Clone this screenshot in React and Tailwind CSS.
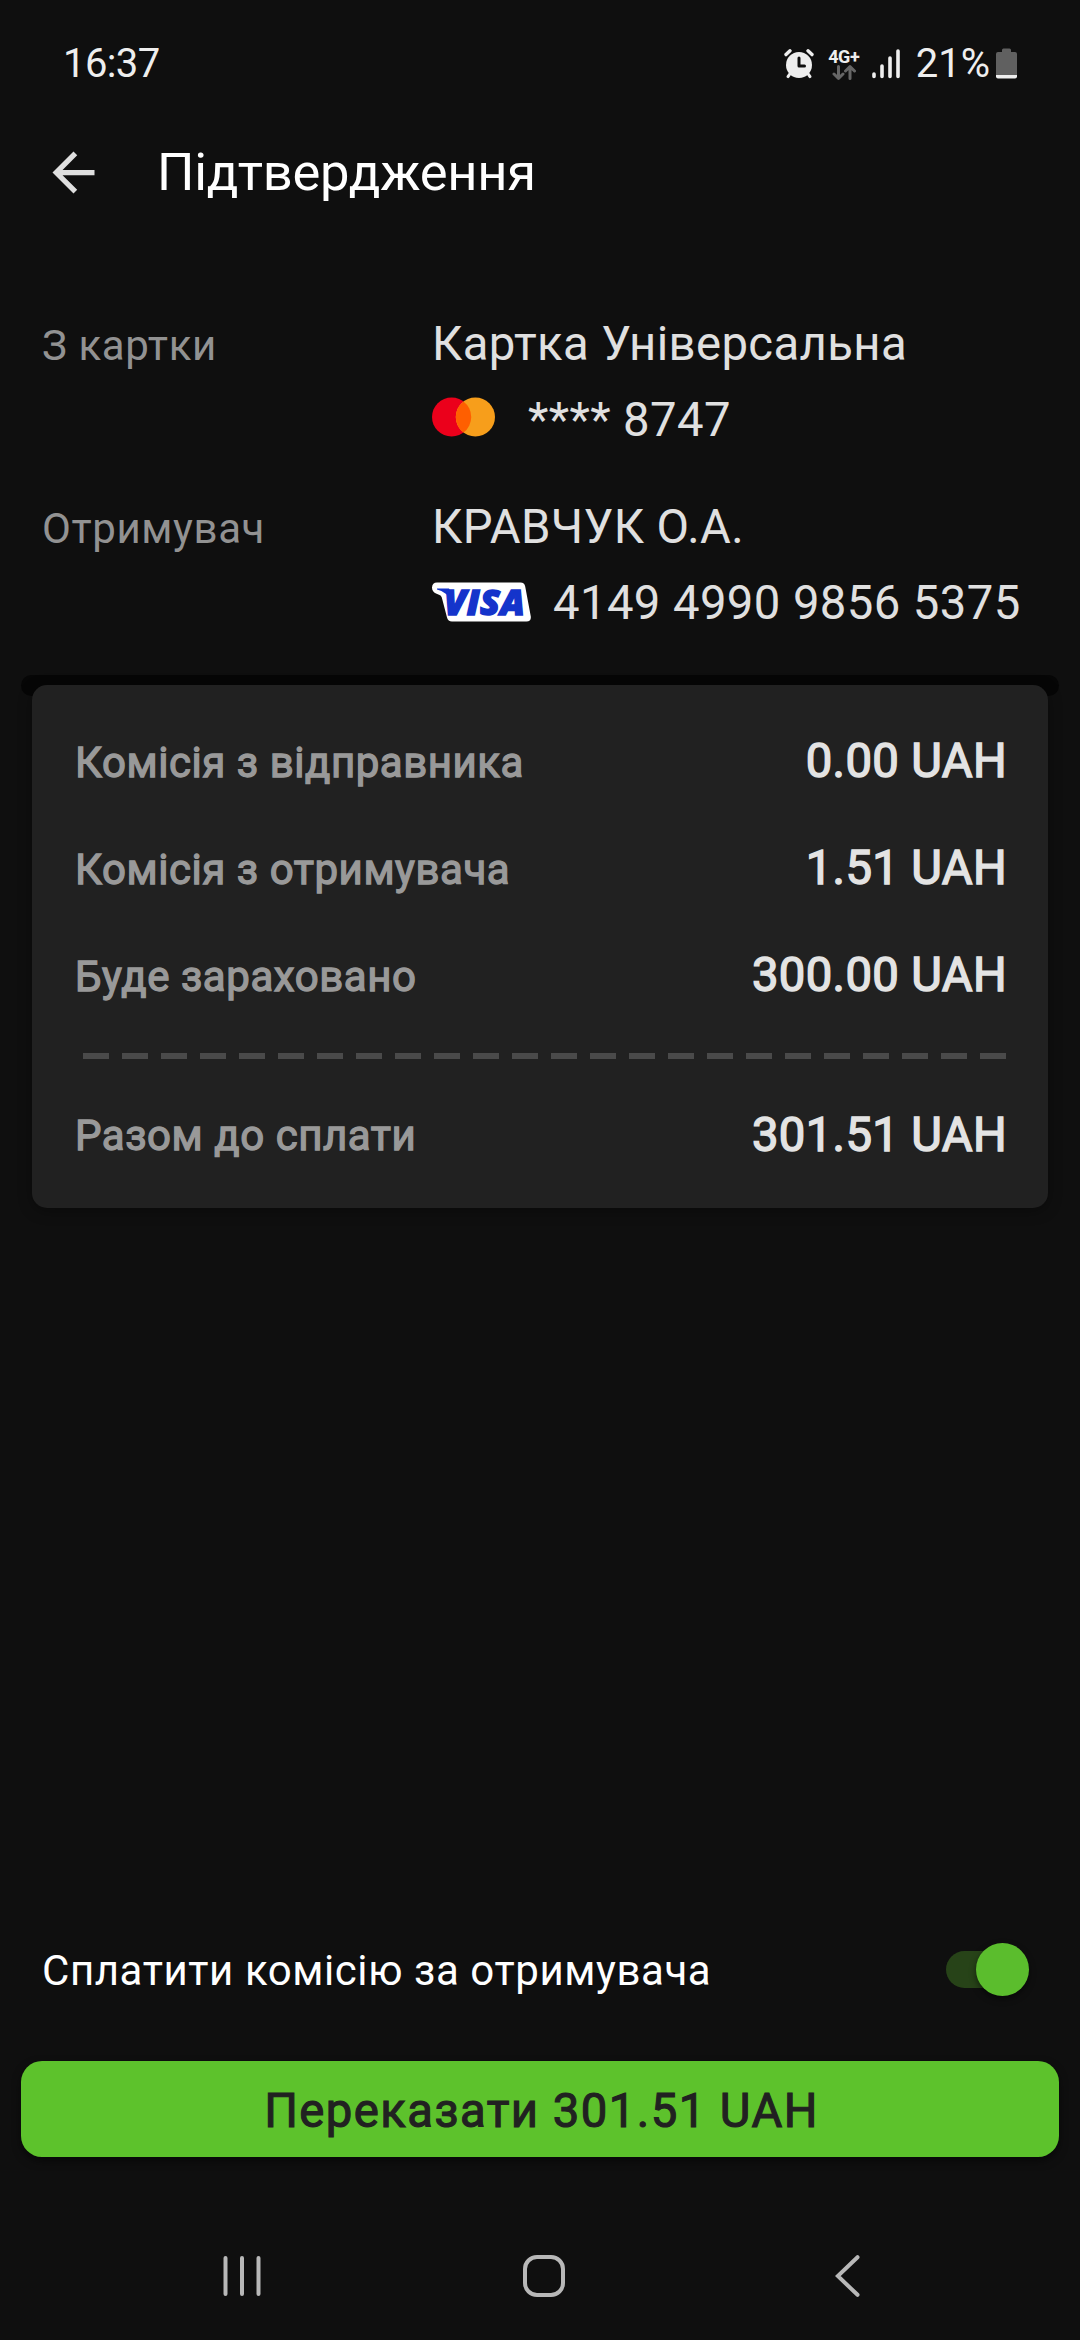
import React from 'react';

const fees = [
    { label: 'Комісія з відправника', value: '0.00 UAH' },
    { label: 'Комісія з отримувача', value: '1.51 UAH' },
    { label: 'Буде зараховано', value: '300.00 UAH' },
];

function AlarmIcon() {
    return (
        <svg width="30" height="30" viewBox="0 0 30 30" className="text-[#eeeeee]">
            <g stroke="currentColor" strokeLinecap="round" fill="none">
                <path d="M2 5.6L6 1.8M28 5.6L24 1.8" strokeWidth="3.4" />
                <path d="M6.5 24L4 27.6M23.5 24L26 27.6" strokeWidth="3" />
            </g>
            <circle cx="15" cy="16" r="13" fill="currentColor" />
            <path d="M15 9V17H20.5" fill="none" stroke="#0f0f0f" strokeWidth="3" strokeLinecap="round" strokeLinejoin="round" />
        </svg>
    );
}

function NetworkIcon() {
    return (
        <div className="flex w-[32px] flex-col items-center">
            <span className="text-[18px] font-bold leading-[17px] tracking-[-0.5px] text-[#eeeeee]">4G+</span>
            <svg width="24" height="15" viewBox="0 0 24 15" fill="none" stroke="#666666" strokeWidth="3" strokeLinecap="round" strokeLinejoin="round">
                <path d="M6.5 1.5V13M2 9L6.5 13.3L11 9" />
                <path d="M18 13.5V2M13.5 6L18 1.7L22.5 6" />
            </svg>
        </div>
    );
}

function SignalIcon() {
    return (
        <svg width="28" height="30" viewBox="0 0 28 30" stroke="#eeeeee" strokeWidth="3.6" strokeLinecap="round">
            <path d="M2 25V27.5M10 17V27.5M18 9V27.5M26 2V27.5" />
        </svg>
    );
}

function BatteryIcon() {
    return (
        <svg width="21" height="31" viewBox="0 0 21 31">
            <path d="M6 2Q6 0.5 7.500 0.500H13.500Q15 0.500 15 2V4H19Q21 4 21 6V27H0V6Q0 4 2 4H6Z" fill="#606060" />
            <path d="M0 27H21V28.500Q21 30.500 19 30.500H2Q0 30.500 0 28.500Z" fill="#eeeeee" />
        </svg>
    );
}

function StatusBar() {
    return (
        <div className="flex h-[127px] items-center justify-between pl-[63px] pr-[63px] text-[#eeeeee]">
            <span className="text-[40px] leading-none tracking-[-0.6px]">16:37</span>
            <div className="flex items-center">
                <AlarmIcon />
                <div className="ml-[14px] flex"><NetworkIcon /></div>
                <div className="ml-[12px] flex"><SignalIcon /></div>
                <span className="ml-[16px] text-[40px] leading-none">21%</span>
                <div className="ml-[6px] flex"><BatteryIcon /></div>
            </div>
        </div>
    );
}

function Mastercard() {
    return (
        <svg width="63" height="40" viewBox="0 0 63 40" className="relative -top-[3px] shrink-0">
            <circle cx="19.600" cy="20" r="19.600" fill="#eb001b" />
            <circle cx="43.400" cy="20" r="19.600" fill="#f79e1b" />
            <path d="M31.500 4.400A19.600 19.600 0 0 1 31.500 35.600A19.600 19.600 0 0 1 31.500 4.400Z" fill="#ff5f00" />
        </svg>
    );
}

function Visa() {
    return (
        <svg width="99" height="40" viewBox="0 0 99 40" className="relative -top-[1px] shrink-0 overflow-visible">
            <path d="M5 0.500H88.500Q92.500 0.500 93.200 4.500L98.800 34.500Q99.300 39.500 94.500 39.500H20Q16 39.500 15 35.500L9.800 15.500Q9.300 13.500 7 12.800L4 11.500Q0 9.500 0 5.500Q0.300 0.500 5 0.500Z" fill="#ffffff" />
            <path d="M5 6.500H17L20 12L21 20Q14 9.500 5 7.500Z" fill="#1434cb" />
            <text x="12" y="33" textLength="81" lengthAdjust="spacingAndGlyphs" className="fill-[#1434cb] stroke-[#1434cb] stroke-[1.5px] font-['Open_Sans',sans-serif] text-[36px] font-extrabold italic">VISA</text>
        </svg>
    );
}

function InfoRow({ label, title, children }) {
    return (
        <div className="flex items-baseline">
            <span className="w-[390px] text-[42px] leading-[76px] tracking-[0.6px] text-[#929292]">{label}</span>
            <div className="text-[47.25px] leading-[76px] tracking-[0.4px] text-[#e0e0e0]">
                <div>{title}</div>
                <div className="flex items-center">{children}</div>
            </div>
        </div>
    );
}

function SummaryRow({ label, value, className }) {
    return (
        <div className={`flex h-[107px] justify-between leading-[107px] ${className}`}>
            <span className="text-[42px] tracking-[0.55px] text-[#999999] [-webkit-text-stroke:1.3px_#999999]">{label}</span>
            <span className="text-[47.25px] tracking-[0.35px] text-[#e3e3e3] [-webkit-text-stroke:1.4px_#e3e3e3]">{value}</span>
        </div>
    );
}

function Summary() {
    return (
        <div className="relative mx-8 mt-[44px]">
            {/* Dark ledge the receipt slides out of */}
            <div className="absolute -left-[11px] -right-[11px] -top-[10px] h-[21px] rounded-full bg-[#060606]" />
            <div className="relative h-[523px] rounded-[15px] bg-[#212121] pl-[43px] pr-[41px] pt-[23px] shadow-[0_3px_14px_rgba(0,0,0,0.35)]">
                {fees.map((fee) => (
                    <SummaryRow key={fee.label} {...fee} className="items-baseline" />
                ))}
                <div className="ml-[8px] mt-[24px] h-[6px] w-[923px] bg-[repeating-linear-gradient(90deg,#4a4a4a_0_26px,transparent_26px_39px)]" />
                <SummaryRow label="Разом до сплати" value="301.51 UAH" className="mt-[23px] items-center" />
            </div>
        </div>
    );
}

function Toggle() {
    return (
        <div className="relative flex h-[53px] w-[83px] items-center">
            <div className="h-[37px] w-[76px] rounded-full bg-[#274318]" />
            <div className="absolute right-0 top-0 size-[53px] rounded-full bg-[#5bbd2d] shadow-[0_3px_6px_rgba(0,0,0,0.5)]" />
        </div>
    );
}

function NavBar() {
    return (
        <div className="flex h-[42px] items-center text-[#b8b8b8]">
            <svg width="38" height="42" viewBox="0 0 38 42" className="ml-[223px]" stroke="currentColor" strokeWidth="4" strokeLinecap="round">
                <path d="M2.500 3V39M19 3V39M35.500 3V39" />
            </svg>
            <svg width="42" height="42" viewBox="0 0 42 42" className="ml-[262px]" fill="none" stroke="currentColor" strokeWidth="4">
                <rect x="2" y="2" width="38" height="38" rx="12" />
            </svg>
            <svg width="25" height="42" viewBox="0 0 25 42" className="ml-[270px]" fill="none" stroke="currentColor" strokeWidth="4" strokeLinecap="round">
                <path d="M22.500 2.200L2.800 21L22.500 39.800" />
            </svg>
        </div>
    );
}

export default function App() {
    return (
        <div className="flex h-[2340px] w-[1080px] flex-col overflow-hidden bg-[#0f0f0f] font-[Roboto,sans-serif]">
            <StatusBar />

            <div className="flex h-[91px] items-center">
                <svg width="63" height="63" viewBox="0 0 24 24" className="ml-[42px]" fill="#dfdfdf">
                    <path d="M20 11H7.830l5.590-5.590L12 4l-8 8 8 8 1.410-1.410L7.830 13H20v-2z" />
                </svg>
                <h1 className="ml-[52px] text-[52.5px] leading-none tracking-[-0.25px] text-white">Підтвердження</h1>
            </div>

            <div className="mt-[88px] flex flex-col gap-[31px] pl-[42px]">
                <InfoRow label="З картки" title="Картка Універсальна">
                    <Mastercard />
                    <span className="ml-[33px]">**** 8747</span>
                </InfoRow>
                <InfoRow label="Отримувач" title="КРАВЧУК О.А.">
                    <Visa />
                    <span className="ml-[22px]">4149 4990 9856 5375</span>
                </InfoRow>
            </div>

            <Summary />

            <div className="mt-auto flex items-center justify-between pl-[42px] pr-[51px]">
                <span className="pt-[3px] text-[42px] leading-[57px] tracking-[0.58px] text-white">Сплатити комісію за отримувача</span>
                <Toggle />
            </div>
            <button className="mx-[21px] mt-[62px] h-24 shrink-0 rounded-[21px] bg-[#5dc22c] pl-[3px] pt-[6px] text-[47.25px] leading-none tracking-[1.45px] text-[#212121] shadow-[0_4px_8px_rgba(0,0,0,0.5)] [-webkit-text-stroke:1.1px_#212121]">
                Переказати 301.51 UAH
            </button>
            <div className="mb-[43px] mt-[98px]">
                <NavBar />
            </div>
        </div>
    );
}
